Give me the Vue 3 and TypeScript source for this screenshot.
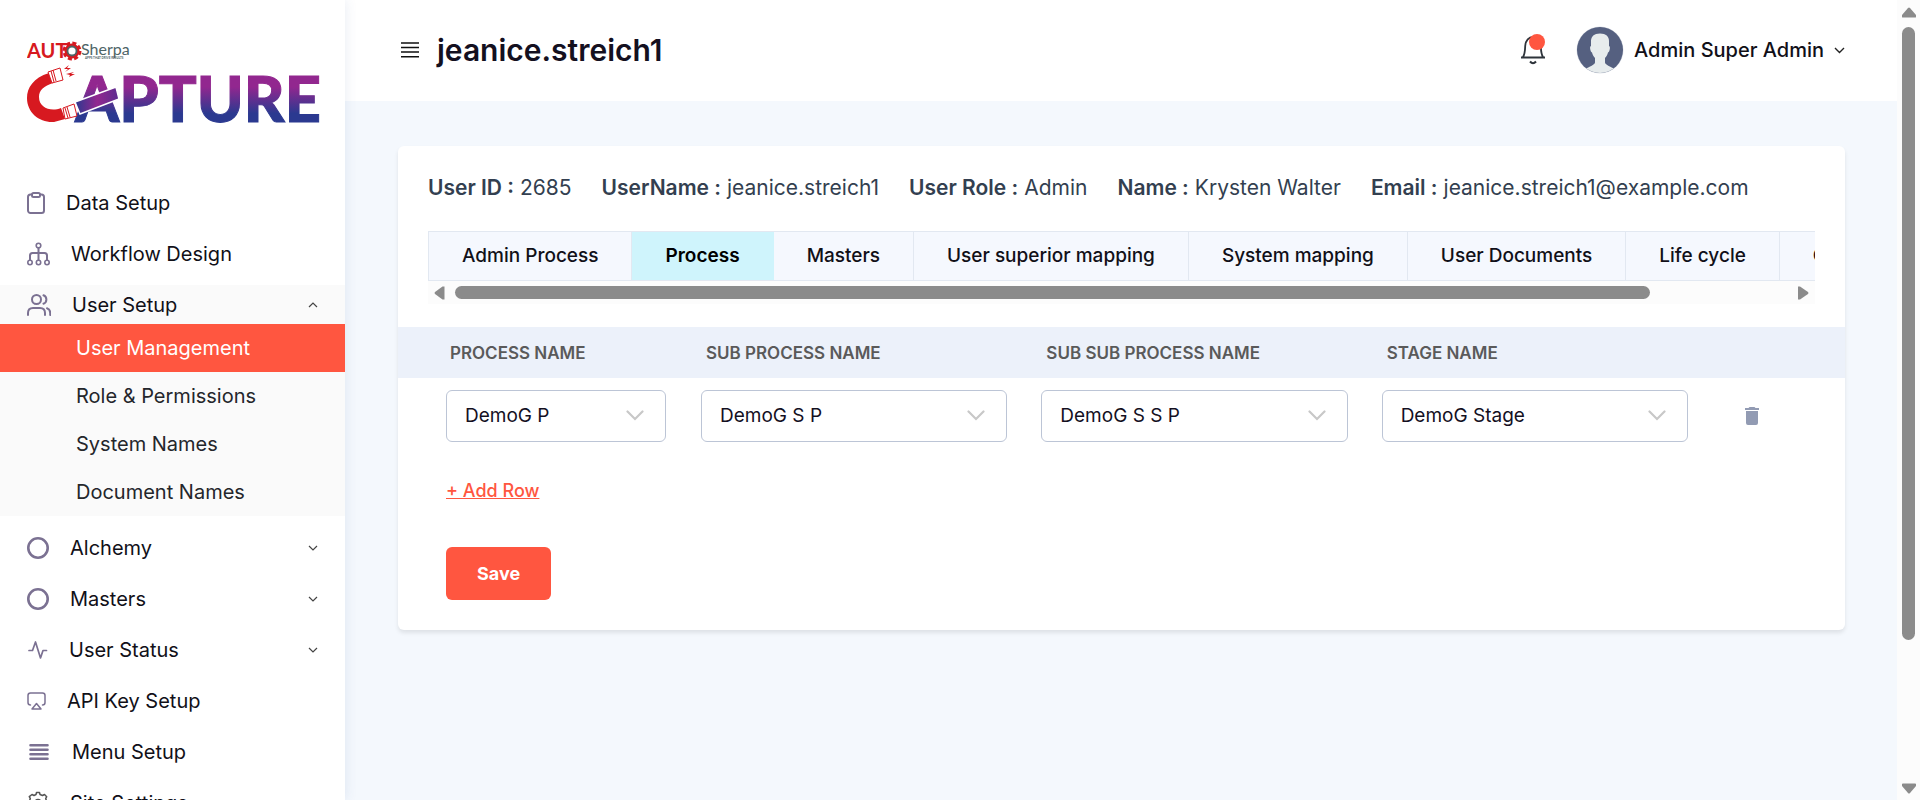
<script setup lang="ts">
import { ref } from 'vue'

interface MenuItem {
  label: string
  icon: string
  width: number
  expandable?: boolean
  open?: boolean
  children?: string[]
}

interface Column {
  title: string
  value: string
  cls: string
}

const menu: MenuItem[] = [
  { label: 'Data Setup', icon: 'clipboard', width: 18 },
  { label: 'Workflow Design', icon: 'tree', width: 23 },
  {
    label: 'User Setup',
    icon: 'users',
    width: 24,
    expandable: true,
    open: true,
    children: ['User Management', 'Role & Permissions', 'System Names', 'Document Names'],
  },
  { label: 'Alchemy', icon: 'ring', width: 22, expandable: true },
  { label: 'Masters', icon: 'ring', width: 22, expandable: true },
  { label: 'User Status', icon: 'pulse', width: 21, expandable: true },
  { label: 'API Key Setup', icon: 'airplay', width: 19 },
  { label: 'Menu Setup', icon: 'bars', width: 24 },
  { label: 'Site Settings', icon: 'gear', width: 22 },
]

const activeChild = ref('User Management')

const facts = [
  { key: 'User ID :', value: '2685' },
  { key: 'UserName :', value: 'jeanice.streich1' },
  { key: 'User Role :', value: 'Admin' },
  { key: 'Name :', value: 'Krysten Walter' },
  { key: 'Email :', value: 'jeanice.streich1@example.com' },
]

const tabs = [
  'Admin Process',
  'Process',
  'Masters',
  'User superior mapping',
  'System mapping',
  'User Documents',
  'Life cycle',
  'Communication',
]
const activeTab = ref('Process')

const columns: Column[] = [
  { title: 'PROCESS NAME', value: 'DemoG P', cls: 'col-first' },
  { title: 'SUB PROCESS NAME', value: 'DemoG S P', cls: 'col-mid' },
  { title: 'SUB SUB PROCESS NAME', value: 'DemoG S S P', cls: 'col-mid' },
  { title: 'STAGE NAME', value: 'DemoG Stage', cls: 'col-mid' },
]
</script>

<template>
  <div class="shell">
    <aside class="sidebar">
      <svg class="logo" width="300" height="84" viewBox="0 0 300 84" role="img" aria-label="AutoSherpa Capture">
        <defs>
          <linearGradient id="word" gradientUnits="userSpaceOnUse" x1="0" y1="34" x2="0" y2="82">
            <stop offset="0.25" stop-color="#92278f" />
            <stop offset="0.8" stop-color="#2b3990" />
          </linearGradient>
          <linearGradient id="bar" x1="0" y1="0" x2="1" y2="0">
            <stop offset="0" stop-color="#2b3990" />
            <stop offset="0.5" stop-color="#92278f" />
            <stop offset="1" stop-color="#5b2d90" />
          </linearGradient>
        </defs>
        <circle cx="45" cy="10" r="8" fill="none" stroke="#d71920" stroke-width="3" stroke-dasharray="4 2.3" />
        <circle cx="45" cy="10" r="6" fill="#fff" stroke="#d71920" stroke-width="3" />
        <circle cx="45" cy="10" r="4.5" fill="none" stroke="#4d6466" stroke-width="1.8" />
        <text class="logo-auto" x="0" y="17">AUT</text>
        <text class="logo-sherpa" x="54" y="14">Sherpa</text>
        <text class="logo-tag" x="58" y="18">APPS THAT DRIVE RESULTS</text>
        <text class="logo-word" x="48" y="81" fill="url(#word)" stroke="url(#word)">APTURE</text>
        <path d="M22 32 C6 37 0 47 0 57 C0 72 13 82 27 81 L38 78 L34 67 C24 71 12 67 12 56 C12 49 17 45 26 42 Z" fill="#d71920" />
        <g fill="#fff" stroke="#d71920" stroke-width="1">
          <path d="M21 31 L33 27 L36 39 L25 42 Z" />
          <path d="M24 30 L27 41 M26 29 L29 40" />
          <path d="M36 67 L47 63 L50 75 L38 78 Z" />
          <path d="M38 67 L41 77 M40 66 L43 76" />
        </g>
        <path d="M48 61 L89 46 L92 58 L53 73 Z" fill="url(#bar)" stroke="#fff" stroke-width="1.5" />
        <path d="M42 24 L37 28 L41 28 L38 31 L44 27 L40 27 Z M47 31 L39 33 L43 34 L42 36 L48 33 L44 33 Z" fill="#d71920" />
      </svg>

      <nav class="menu" aria-label="Main">
        <div v-for="item in menu" :key="item.label" class="group" :class="{ open: item.open }">
          <button class="item" type="button" :aria-expanded="item.expandable ? !!item.open : undefined">
            <svg
              class="icon"
              :width="item.width"
              height="24"
              :viewBox="`0 0 ${item.width} 24`"
              fill="none"
              stroke="#7b7192"
              stroke-width="2"
              stroke-linecap="round"
              stroke-linejoin="round"
              aria-hidden="true"
            >
              <template v-if="item.icon === 'clipboard'">
                <path d="M5 3.5H3.5A2.5 2.5 0 0 0 1 6v13.500A2.5 2.500 0 0 0 3.500 22h11a2.500 2.500 0 0 0 2.500-2.500V6a2.500 2.500 0 0 0-2.500-2.500H13" />
                <rect x="5" y="2" width="8" height="4" rx="1.500" />
              </template>
              <template v-else-if="item.icon === 'tree'">
                <g stroke-width="1.600">
                  <circle cx="11.500" cy="3.500" r="2.300" />
                  <circle cx="3" cy="20.500" r="2.200" />
                  <circle cx="11.500" cy="20.500" r="2.200" />
                  <circle cx="20" cy="20.500" r="2.200" />
                </g>
                <path d="M11.500 6v12M3 18v-4.500q0-2.500 2.500-2.500h12q2.500 0 2.500 2.500V18" />
              </template>
              <template v-else-if="item.icon === 'users'">
                <circle cx="9.500" cy="6.500" r="4.500" />
                <path d="M1 22v-2q0-5 5-5h7q5 0 5 5v2M16.500 2.300a4.500 4.500 0 0 1 0 8.400M20 15.200q3.200 1 3.200 4.800v2" />
              </template>
              <circle v-else-if="item.icon === 'ring'" cx="11" cy="12" r="9.700" stroke-width="2.600" />
              <path v-else-if="item.icon === 'pulse'" d="M2 12.500h3.500L8.500 4l5 16 2.500-7.500h3.500" stroke-width="1.700" />
              <g v-else-if="item.icon === 'airplay'" stroke-width="1.500">
                <path d="M3.500 16Q1 16 1 13.500V6.500Q1 4 3.500 4h12Q18 4 18 6.500v7q0 2.500-2.500 2.500" />
                <path d="M9.500 14.500L14 20H5z" />
              </g>
              <path v-else-if="item.icon === 'bars'" d="M3.500 5.200h17M3.500 9.700h17M3.500 14.200h17M3.500 18.700h17" stroke-width="2.600" />
              <g v-else stroke="#555" stroke-width="1.500">
                <path d="M9 3.500L9.500 1.500h3l.5 2 2.500 1 2-1 2.200 2.200-1 2 1 2.500 2 .6v2.600l-2 .6-1 2.500 1 2-2.200 2.200-2-1-2.500 1-.5 2h-3l-.5-2-2.500-1-2 1-2.200-2.200 1-2-1-2.500-1.500-.6v-2.600l1.500-.6 1-2.500-1-2L5 3.500l2 1z" />
                <circle cx="11" cy="12" r="3.500" />
              </g>
            </svg>
            <span class="label">{{ item.label }}</span>
            <svg v-if="item.expandable" class="caret" width="10" height="6" viewBox="0 0 10 6" fill="none" stroke="#444" stroke-width="1.200" aria-hidden="true">
              <path :d="item.open ? 'M1 5l4-4 4 4' : 'M1 1l4 4 4-4'" />
            </svg>
          </button>
          <div v-if="item.children" class="children">
            <a
              v-for="child in item.children"
              :key="child"
              href="#"
              class="child"
              :class="{ active: child === activeChild }"
              @click.prevent="activeChild = child"
              >{{ child }}</a
            >
          </div>
        </div>
      </nav>
    </aside>

    <div class="page">
      <header class="topbar">
        <button class="burger" type="button" aria-label="Toggle menu">
          <svg width="18" height="16" viewBox="0 0 18 16" stroke="#111" stroke-width="1.400" aria-hidden="true">
            <path d="M0 1h18M0 5.500h18M0 10h18M0 14.700h18" />
          </svg>
        </button>
        <h1>jeanice.streich1</h1>
        <button class="bell" type="button" aria-label="Notifications">
          <svg width="26" height="30" viewBox="0 0 26 30" fill="none" stroke="#2e343b" stroke-width="1.800" aria-hidden="true">
            <path d="M1 22.500h24M3 22c2-3 2-6 2.200-11C5.500 5.500 9 2 13 2s7.500 3.500 7.800 9c.2 5 .2 8 2.200 11" />
            <path d="M10 26.500q3 3.500 6 0" stroke-width="2" />
          </svg>
          <span class="dot"></span>
        </button>
        <button class="account" type="button">
          <svg width="48" height="48" viewBox="0 0 48 48" aria-hidden="true">
            <defs>
              <clipPath id="face"><circle cx="24" cy="24" r="23" /></clipPath>
            </defs>
            <circle cx="24" cy="24" r="23.500" fill="#dcdfe6" />
            <g clip-path="url(#face)">
              <rect width="48" height="48" fill="#556080" />
              <path
                d="M24 7.500c6 0 9 3 9 7.500v5c1 .5 1 1.500.8 3-.2 1.500-.8 3-1.800 3.500-.5 2-1.500 4-3 5.500v4.500c0 2 5 4 11 7V50H8v-6.500c6-3 11-5 11-7V32c-1.500-1.500-2.500-3.500-3-5.500-1-.5-1.600-2-1.800-3.500-.2-1.500-.2-2.500.8-3v-5c0-4.500 3-7.500 9-7.500z"
                fill="#e7eced"
              />
            </g>
          </svg>
          <span>Admin Super Admin</span>
          <svg width="11" height="7" viewBox="0 0 11 7" fill="none" stroke="#222" stroke-width="1.400" aria-hidden="true">
            <path d="M1 1l4.500 4.500L10 1" />
          </svg>
        </button>
      </header>

      <main class="content">
        <section class="card">
          <dl class="facts">
            <div v-for="fact in facts" :key="fact.key" class="fact">
              <dt>{{ fact.key }}</dt>
              <dd>{{ fact.value }}</dd>
            </div>
          </dl>

          <div class="tabs-box">
            <div class="tabs" role="tablist">
              <button
                v-for="tab in tabs"
                :key="tab"
                type="button"
                role="tab"
                class="tab"
                :class="{ active: tab === activeTab }"
                :aria-selected="tab === activeTab"
                @click="activeTab = tab"
              >
                {{ tab }}
              </button>
            </div>
            <div class="hbar" aria-hidden="true">
              <svg width="12" height="14" viewBox="0 0 12 14"><path d="M10.500 0.500v13h-2L1 8q-1-1 0-2L8.500 0.500z" fill="#8b8b8b" /></svg>
              <div class="htrack"><div class="hthumb"></div></div>
              <svg width="12" height="14" viewBox="0 0 12 14"><path d="M1 0.500v13h2L11 8q1-1 0-2L3 0.500z" fill="#8b8b8b" /></svg>
            </div>
          </div>

          <table class="grid">
            <thead>
              <tr>
                <th v-for="col in columns" :key="col.title" scope="col" :class="col.cls">{{ col.title }}</th>
                <th class="col-last"></th>
              </tr>
            </thead>
            <tbody>
              <tr>
                <td v-for="col in columns" :key="col.title" :class="col.cls">
                  <div class="select">
                    <select :aria-label="col.title">
                      <option>{{ col.value }}</option>
                    </select>
                    <svg class="select-caret" width="18" height="11" viewBox="0 0 18 11" fill="none" stroke="#c8c8c8" stroke-width="2.200" stroke-linecap="round" aria-hidden="true">
                      <path d="M1.500 1.500L9 9l7.500-7.500" />
                    </svg>
                  </div>
                </td>
                <td class="col-last">
                  <button class="trash" type="button" aria-label="Delete row">
                    <svg width="14" height="18" viewBox="0 0 14 18" fill="#929bb3" aria-hidden="true">
                      <path d="M0 1h3.500l1-1h5l1 1H14v2H0zM1 4h12v12q0 2-2 2H3q-2 0-2-2z" />
                    </svg>
                  </button>
                </td>
              </tr>
            </tbody>
          </table>

          <div class="actions">
            <button class="add" type="button">+ Add Row</button>
            <button class="save" type="button">Save</button>
          </div>
        </section>
      </main>
    </div>

    <div class="vbar" aria-hidden="true">
      <svg width="14" height="11" viewBox="0 0 14 11"><path d="M0 10V8L6 1q1-1 2 0l6 7v2q0 .5-1 .5H1Q0 10.500 0 10z" fill="#8b8b8b" /></svg>
      <div class="vtrack"><div class="vthumb"></div></div>
      <svg width="14" height="11" viewBox="0 0 14 11"><path d="M0 1v2l6 7q1 1 2 0l6-7V1q0-.5-1-.5H1Q0 .5 0 1z" fill="#8b8b8b" /></svg>
    </div>
  </div>
</template>

<style>
body {
  margin: 0;
  background: #f4f8fd;
}
</style>

<style scoped>
.shell {
  display: flex;
  height: 100vh;
  overflow: hidden;
  font-family: Inter, 'Liberation Sans', sans-serif;
  font-size: 19px;
  line-height: 24px;
  color: #111018;
}
.shell * {
  box-sizing: border-box;
}
button {
  margin: 0;
  padding: 0;
  border: 0;
  background: none;
  font: inherit;
  color: inherit;
  cursor: pointer;
}
svg {
  display: block;
  flex: none;
}

.sidebar {
  z-index: 1;
  flex: none;
  width: 345px;
  overflow: hidden;
  background: #fff;
  box-shadow: 0 0 12px rgba(60, 90, 160, 0.12);
  font-size: 20px;
}
.logo {
  margin: 41px 0 58px 27px;
}
.logo-auto {
  font: 700 20px Lato, sans-serif;
  fill: #d71920;
}
.logo-sherpa {
  font: 400 16px Lato, sans-serif;
  fill: #4d6466;
}
.logo-tag {
  font: 700 3px Lato, sans-serif;
  fill: #4d6466;
}
.logo-word {
  font: 900 63px Lato, sans-serif;
  stroke-width: 1px;
}
.menu {
  display: flex;
  flex-direction: column;
  gap: 12px;
}
.group.open {
  background: #fafafa;
}
.item {
  display: flex;
  align-items: center;
  width: 100%;
  height: 39px;
  padding: 0 27px;
  text-align: left;
}
.label {
  flex: 1;
  margin-left: 21px;
}
.child {
  display: flex;
  align-items: center;
  height: 48px;
  padding-left: 76px;
  color: #24262b;
  text-decoration: none;
}
.child.active {
  background: #ff5640;
  color: #fff;
}

.page {
  flex: 1;
  min-width: 0;
}
.topbar {
  display: flex;
  align-items: center;
  height: 101px;
  padding: 0 52px 1px 56px;
  background: #fff;
}
h1 {
  flex: 1;
  margin: 0 0 0 18px;
  font-size: 30px;
  line-height: 36px;
  font-weight: 600;
  color: #14101f;
}
.bell {
  position: relative;
  margin-right: 30px;
}
.dot {
  position: absolute;
  top: -1px;
  right: 1px;
  width: 16px;
  height: 16px;
  border-radius: 50%;
  background: #ff5640;
}
.account {
  display: flex;
  align-items: center;
  gap: 10px;
  font-size: 20px;
  font-weight: 500;
}

.content {
  padding: 45px 52px 45px 53px;
}
.card {
  padding: 30px 0;
  border-radius: 6px;
  background: #fff;
  box-shadow: 0 3px 4px rgba(0, 0, 0, 0.09);
}
.facts {
  display: flex;
  gap: 30px;
  margin: 0 30px 31px;
  font-size: 21px;
  color: #333f50;
  white-space: nowrap;
}
.fact {
  display: flex;
  gap: 6px;
}
dt {
  font-weight: 600;
}
dd {
  margin: 0;
}

.tabs-box {
  margin: 0 30px 23px;
}
.tabs {
  display: flex;
  overflow: hidden;
  border: solid #e2e8f1;
  border-width: 1px 0 1px 1px;
  background: #f5f8fe;
}
.tab {
  flex: none;
  height: 48px;
  padding: 0 33px;
  border-right: 1px solid #e2e8f1;
  font-weight: 500;
}
.tab.active {
  background: #cff4fc;
  border-color: #cff4fc;
  font-weight: 600;
  color: #000;
}
.hbar {
  display: flex;
  align-items: center;
  gap: 9px;
  height: 23px;
  padding: 0 6px;
  background: #fcfcfc;
}
.htrack {
  flex: 1;
  padding-right: 138px;
}
.hthumb {
  height: 13px;
  border-radius: 7px;
  background: #8b8b8b;
}

.grid {
  width: 100%;
  table-layout: fixed;
  border-collapse: collapse;
}
th {
  height: 51px;
  padding: 0 0 0 22px;
  background: #ecf1fa;
  font-size: 17px;
  font-weight: 600;
  text-align: left;
  color: #5a5a5a;
}
td {
  padding: 12px 17px;
}
.col-first {
  width: 286px;
}
.col-last {
  width: 140px;
}
th.col-first {
  padding-left: 52px;
}
td.col-first {
  padding-left: 48px;
  padding-right: 18px;
}
.select {
  position: relative;
}
select {
  display: block;
  width: 100%;
  height: 52px;
  padding: 0 18px;
  appearance: none;
  border: 1px solid #bcc5d6;
  border-radius: 6px;
  background: #fff;
  font: inherit;
  color: #14101f;
}
.select-caret {
  position: absolute;
  top: 20px;
  right: 22px;
  pointer-events: none;
}
.trash {
  display: block;
  margin-left: 23px;
}
.actions {
  display: flex;
  flex-direction: column;
  align-items: flex-start;
  gap: 44px;
  margin: 25px 48px 0;
}
.add {
  font-size: 18px;
  font-weight: 500;
  color: #ff5640;
  text-decoration: underline;
}
.save {
  height: 53px;
  padding: 0 31px;
  border-radius: 6px;
  background: #ff5640;
  font-size: 18px;
  font-weight: 700;
  color: #fff;
}

.vbar {
  display: flex;
  flex: none;
  flex-direction: column;
  align-items: center;
  gap: 9px;
  width: 23px;
  padding: 7px 0 6px;
  background: #fcfcfc;
}
.vtrack {
  flex: 1;
}
.vthumb {
  width: 13px;
  height: 82%;
  border-radius: 7px;
  background: #8b8b8b;
}
</style>
